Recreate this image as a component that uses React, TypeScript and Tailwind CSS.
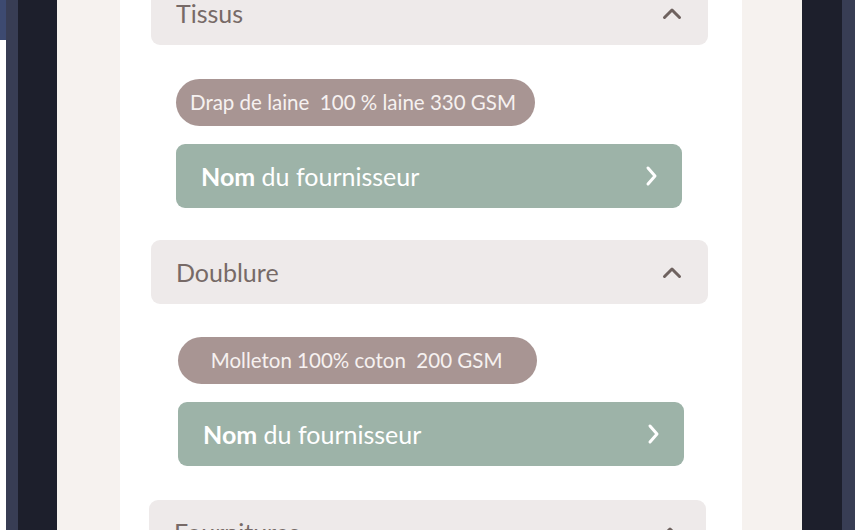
import React from "react";

const font = { fontFamily: "Lato, 'Open Sans', sans-serif" };

function ChevronUp() {
  return (
    <svg width="20" height="13" viewBox="0 0 20 13" fill="none">
      <path d="M2.5 10.5 L10 3 L17.5 10.5" stroke="#6e625f" strokeWidth="3" strokeLinecap="round" strokeLinejoin="round" />
    </svg>
  );
}

function ChevronRight() {
  return (
    <svg width="13" height="22" viewBox="0 0 13 22" fill="none">
      <path d="M3 3 L10 11 L3 19" stroke="#ffffff" strokeWidth="3" strokeLinecap="round" strokeLinejoin="round" />
    </svg>
  );
}

function Header({ title, className }: { title: string; className: string }) {
  return (
    <div className={`flex h-[64px] w-[557px] shrink-0 items-center justify-between rounded-[9px] bg-[#eeeaea] pl-[25px] pr-[26px] ${className}`}>
      <span className="text-[25px] leading-none text-[#776a67]">{title}</span>
      <ChevronUp />
    </div>
  );
}

function Chip({ text, className }: { text: string; className: string }) {
  return (
    <div className={`flex h-[47px] w-[359px] shrink-0 items-center rounded-full bg-[#a89593] px-[14px] text-[20.5px] leading-none text-[#f6f1f0] ${className}`}>
      <span className="whitespace-pre">{text}</span>
    </div>
  );
}

function Supplier({ className }: { className: string }) {
  return (
    <div className={`flex h-[64px] w-[506px] shrink-0 items-center justify-between rounded-[9px] bg-[#9db3a8] pl-[25px] pr-[24px] text-[25px] leading-none text-white ${className}`}>
      <span>
        <b className="font-bold">Nom</b> du fournisseur
      </span>
      <ChevronRight />
    </div>
  );
}

export default function App() {
  return (
    <div className="flex h-[530px] w-[860px] overflow-hidden bg-white" style={font}>
      <div className="flex w-[6px] flex-col">
        <div className="h-[40px] bg-[#3d4a71]" />
        <div className="flex-1 bg-white" />
      </div>
      <div className="w-[12px] bg-[#383d54]" />
      <div className="w-[39px] bg-[#1d1f2c]" />
      <div className="w-[63px] bg-[#f6f2ef]" />
      <div className="flex w-[622px] flex-col bg-white">
        <Header title="Tissus" className="-mt-[19px] ml-[31px]" />
        <Chip text="Drap de laine  100 % laine 330 GSM" className="ml-[56px] mt-[34px]" />
        <Supplier className="ml-[56px] mt-[18px]" />
        <Header title="Doublure" className="ml-[31px] mt-[32px]" />
        <Chip text="   Molleton 100% coton  200 GSM" className="ml-[58px] mt-[33px] pl-[17px]" />
        <Supplier className="ml-[58px] mt-[18px]" />
        <Header title="Fournitures" className="ml-[29px] mt-[34px]" />
      </div>
      <div className="w-[60px] bg-[#f6f2ef]" />
      <div className="w-[40px] bg-[#1d1f2c]" />
      <div className="w-[13px] bg-[#383d54]" />
      <div className="w-[5px] bg-white" />
    </div>
  );
}
